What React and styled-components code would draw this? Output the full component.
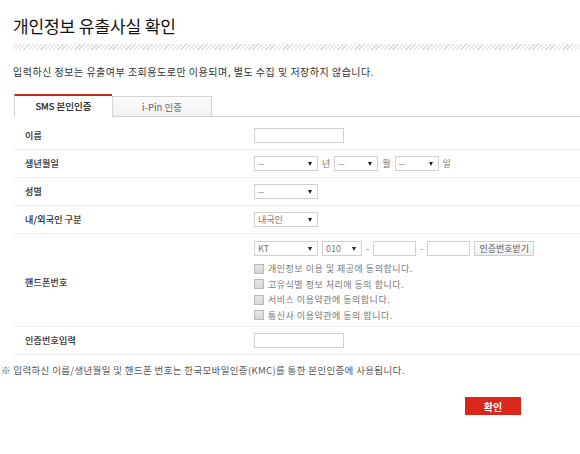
import styled, { createGlobalStyle } from 'styled-components';

const GlobalStyle = createGlobalStyle`
  body {
    margin: 0;
    background: #fff;
    font-family: "Noto Sans CJK KR", "Noto Sans", sans-serif;
    color: #333;
  }
  * { box-sizing: border-box; }
`;

const Page = styled.div`
  padding: 14px 0 40px 13px;
`;

const Title = styled.h1`
  margin: 0;
  font-size: 17px;
  line-height: 23px;
  font-weight: 400;
  letter-spacing: -0.1px;
  color: #111;
`;

const Hatch = styled.div`
  margin-top: 7px;
  height: 6px;
  background: repeating-linear-gradient(
    -45deg,
    #d9d9d9 0px,
    #d9d9d9 1px,
    #fff 1px,
    #fff 3px
  );
`;

const Desc = styled.p`
  margin: 15px 0 0;
  font-size: 10px;
  line-height: 14px;
  letter-spacing: 0.5px;
  color: #333;
`;

const TabBar = styled.div`
  margin: 16px 0 0 1px;
  height: 22px;
  display: flex;
  align-items: flex-end;
  border-bottom: 1px solid #cfcfcf;
`;

const Tab = styled.div`
  width: ${p => (p.$active ? '98px' : '100px')};
  height: ${p => (p.$active ? '23px' : '20px')};
  margin-bottom: ${p => (p.$active ? '-1px' : '0')};
  display: flex;
  align-items: center;
  justify-content: center;
  font-size: 9.5px;
  color: ${p => (p.$active ? '#111' : '#666')};
  -webkit-text-stroke: ${p => (p.$active ? '0.2px #111' : '0')};
  background: ${p => (p.$active ? '#fff' : 'linear-gradient(#fcfcfc, #f1f1f1)')};
  border: 1px solid #d3d3d3;
  border-top: ${p => (p.$active ? '2px solid #c9271d' : '1px solid #d3d3d3')};
  border-bottom: none;
  border-right: ${p => (p.$active ? 'none' : '1px solid #d3d3d3')};
  padding-bottom: ${p => (p.$active ? '2px' : '0')};
`;

const Table = styled.div`
  margin: 5px 0 0 1px;
`;

const Row = styled.div`
  display: grid;
  grid-template-columns: 240px 1fr;
  align-items: center;
  padding: ${p => p.$pad || '6px 0'};
  border-bottom: 1px solid #ececec;
`;

const Label = styled.div`
  padding-left: 11px;
  font-size: 9px;
  letter-spacing: 0.2px;
  color: #1a1a1a;
  -webkit-text-stroke: 0.18px #1a1a1a;
`;

const Field = styled.div`
  display: flex;
  flex-direction: column;
  gap: 5px;
`;

const Line = styled.div`
  display: flex;
  align-items: center;
  gap: 4px;
  height: 15px;
  font-size: 9px;
  color: #777;
`;

const Input = styled.div`
  width: ${p => p.$w || 90}px;
  height: 15px;
  border: 1px solid #d0d0d0;
  background: #fff;
`;

const Select = styled.div`
  width: ${p => p.$w || 64}px;
  height: 15px;
  border: 1px solid #d0d0d0;
  background: #fff;
  display: flex;
  align-items: center;
  justify-content: space-between;
  padding: 0 5px 0 3px;
  font-size: 9px;
  color: #777;

  &::after {
    content: '';
    border-left: 2.5px solid transparent;
    border-right: 2.5px solid transparent;
    border-top: 4px solid #222;
  }
`;

const SmallButton = styled.div`
  width: 60px;
  height: 15px;
  border: 1px solid #cfcfcf;
  background: linear-gradient(#fdfdfd, #efefef);
  display: flex;
  align-items: center;
  justify-content: center;
  font-size: 9px;
  color: #555;
`;

const Checks = styled.div`
  display: flex;
  flex-direction: column;
`;

const Check = styled.label`
  display: flex;
  align-items: center;
  gap: 4px;
  height: 15.5px;
  font-size: 9px;
  letter-spacing: 0.5px;
  color: #777;

  &::before {
    content: '';
    width: 8px;
    height: 8px;
    border: 1px solid #b9b9b9;
    background: linear-gradient(#e6e6e6, #d6d6d6);
  }
`;

const Note = styled.p`
  margin: 8px 0 0 -12px;
  font-size: 9.5px;
  line-height: 14px;
  letter-spacing: 0.35px;
  color: #555;
`;

const Actions = styled.div`
  display: flex;
  justify-content: flex-end;
  padding-right: 59px;
  margin-top: 20px;
`;

const Confirm = styled.button`
  width: 56px;
  height: 18px;
  border: none;
  background: #d9271c;
  color: #fff;
  font-family: inherit;
  font-size: 10px;
  font-weight: 700;
  padding: 0;
`;

const agreements = [
  '개인정보 이용 및 제공에 동의합니다.',
  '고유식별 정보 처리에 동의 합니다.',
  '서비스 이용약관에 동의합니다.',
  '통신사 이용약관에 동의 합니다.',
];

export default function App() {
  return (
    <Page>
      <GlobalStyle />
      <Title>개인정보 유출사실 확인</Title>
      <Hatch />
      <Desc>입력하신 정보는 유출여부 조회용도로만 이용되며, 별도 수집 및 저장하지 않습니다.</Desc>

      <TabBar>
        <Tab $active>SMS 본인인증</Tab>
        <Tab>i-Pin 인증</Tab>
      </TabBar>

      <Table>
        <Row>
          <Label>이름</Label>
          <Line><Input /></Line>
        </Row>
        <Row>
          <Label>생년월일</Label>
          <Line>
            <Select>--</Select>년
            <Select $w={44}>--</Select>월
            <Select $w={44}>--</Select>일
          </Line>
        </Row>
        <Row>
          <Label>성별</Label>
          <Line><Select>--</Select></Line>
        </Row>
        <Row>
          <Label>내/외국인 구분</Label>
          <Line><Select>내국인</Select></Line>
        </Row>
        <Row $pad="7px 0 3px">
          <Label>핸드폰번호</Label>
          <Field>
            <Line>
              <Select>KT</Select>
              <Select $w={40}>010</Select>-
              <Input $w={43} />-
              <Input $w={43} />
              <SmallButton>인증번호받기</SmallButton>
            </Line>
            <Checks>
              {agreements.map(a => (
                <Check key={a}>{a}</Check>
              ))}
            </Checks>
          </Field>
        </Row>
        <Row>
          <Label>인증번호입력</Label>
          <Line><Input /></Line>
        </Row>
      </Table>

      <Note>※ 입력하신 이름/생년월일 및 핸드폰 번호는 한국모바일인증(KMC)를 통한 본인인증에 사용됩니다.</Note>

      <Actions>
        <Confirm>확인</Confirm>
      </Actions>
    </Page>
  );
}
